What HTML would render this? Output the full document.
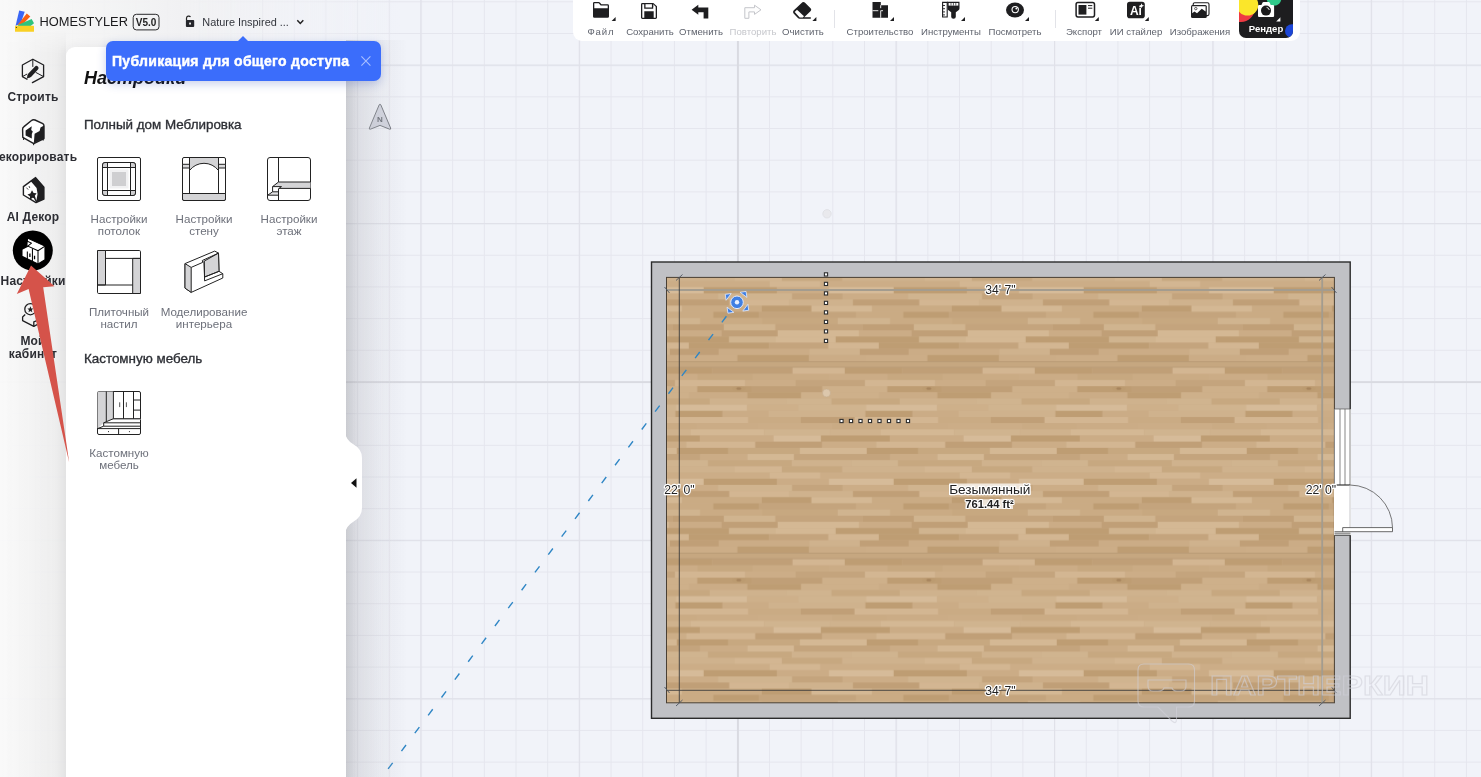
<!DOCTYPE html>
<html lang="ru">
<head>
<meta charset="utf-8">
<title>Homestyler</title>
<style>
*{box-sizing:border-box;margin:0;padding:0}
html,body{width:1481px;height:777px;overflow:hidden;background:#f1f3f9;font-family:"Liberation Sans","DejaVu Sans",sans-serif;color:#1c1c1c}
#app{position:relative;width:1481px;height:777px;overflow:hidden}
#canvas{position:absolute;left:0;top:0}

.abs{position:absolute}
#hdrbg{position:absolute;left:0;top:0;width:420px;height:777px;background:linear-gradient(90deg,rgba(249,249,249,.97) 0,rgba(245,245,245,.95) 40px,rgba(241,241,242,.92) 180px,rgba(241,242,246,.6) 300px,rgba(241,243,249,0) 400px)}
#side{position:absolute;left:0;top:30px;width:66px;height:747px;background:linear-gradient(90deg,rgba(0,0,0,0) 0,rgba(0,0,0,.006) 26px,rgba(0,0,0,.022) 50px,rgba(0,0,0,.042) 66px);-webkit-mask-image:linear-gradient(180deg,transparent 0,#000 24px);mask-image:linear-gradient(180deg,transparent 0,#000 24px)}
#panel{position:absolute;left:66px;top:47px;width:280px;height:740px;background:#fff;border-radius:9px 0 0 0;box-shadow:0 0 12px rgba(40,40,60,.07)}
#pshadow{position:absolute;left:346px;top:40px;width:60px;height:737px;background:linear-gradient(90deg,rgba(20,20,30,.15) 0,rgba(20,20,30,.085) 14px,rgba(20,20,30,.035) 36px,rgba(20,20,30,0) 62px)}
#panelcover{position:absolute;left:0;top:0;width:66px;height:47px}
.sitem{position:absolute;left:-10px;width:86px;text-align:center;font-weight:bold;font-size:12px;color:#2c2d33;white-space:nowrap;line-height:12.5px;letter-spacing:.18px}
.ptitle{position:absolute;left:84px;top:67.5px;font-size:18px;font-weight:bold;font-style:italic;color:#111}
.psec{position:absolute;left:84px;font-size:13.4px;color:#2e3036;-webkit-text-stroke:.35px #2e3036;white-space:nowrap}
.plbl{position:absolute;width:110px;text-align:center;font-size:11.600px;line-height:12.400px;color:#6d707a;white-space:nowrap}
#tip{position:absolute;left:106px;top:41px;width:275px;height:40px;border-radius:7px;background:#3b6dfb;box-shadow:0 3px 10px rgba(40,70,180,.25)}
#tip:before{content:"";position:absolute;left:132px;top:-5px;border:5.5px solid transparent;border-top:0;border-bottom:5.5px solid #3b6dfb}
#tip span{position:absolute;left:6px;top:12px;font-size:14px;font-weight:bold;color:#fff;white-space:nowrap;letter-spacing:.3px;-webkit-text-stroke:.45px #fff}
#tb{position:absolute;left:573px;top:0;width:727px;height:40.5px;background:#fff;border-radius:0 0 9px 9px}
.tl{position:absolute;top:25.600px;width:90px;margin-left:-45px;text-align:center;font-size:9.6px;color:#5f636d;white-space:nowrap}
.tl.dis{color:#c6c7cc}
.tsep{position:absolute;top:9.5px;width:1px;height:18.5px;background:#e2e3e8}
#rbtn{position:absolute;left:1239px;top:0;width:54px;height:38px;background:#1d1d1f;border-radius:0 0 7px 7px;overflow:hidden}
.sitem,.plbl,.psec,.ptitle,.tl,#tip span,svg.abs,#rbtn svg,#canvas{will-change:transform}
</style>
</head>
<body>
<div id="app">
<svg id="canvas" width="1481" height="777" viewBox="0 0 1481 777">
<defs>
<pattern id="gridS" x="8.64" y="1.3" width="31.68" height="31.68" patternUnits="userSpaceOnUse">
<path d="M0 .5H31.68M.5 0V31.68" stroke="#e5e6ee" stroke-width="1.05" fill="none"/>
</pattern>
<pattern id="gridL" x="103.6" y="64.65" width="158.4" height="158.4" patternUnits="userSpaceOnUse">
<path d="M0 .5H158.4M.5 0V158.4" stroke="#e0e1e9" stroke-width="1.400" fill="none"/>
</pattern>
<pattern id="wood" x="643.8" y="169.7" width="190" height="191.5" patternUnits="userSpaceOnUse">
<rect width="190.0" height="191.50" fill="#cbac86"/>
<rect x="0" y="0" width="190.0" height="6.5" fill="#c6a780"/>
<path d="M0 .3H190.0M0 6.2H190.0" stroke="#ad916d" stroke-width=".7"/>
<rect x="10.9" y="6.50" width="57.3" height="6.23" fill="#be9d73"/>
<rect x="68.2" y="6.50" width="80.6" height="6.23" fill="#c09f77"/>
<rect x="148.8" y="6.50" width="41.2" height="6.23" fill="#d3b692"/>
<rect x="0" y="6.50" width="10.9" height="6.23" fill="#d3b692"/>
<rect x="53.4" y="12.67" width="55.4" height="6.23" fill="#c7a880"/>
<rect x="108.9" y="12.67" width="76.3" height="6.23" fill="#caab84"/>
<rect x="185.2" y="12.67" width="4.8" height="6.23" fill="#cbac86"/>
<rect x="0" y="12.67" width="53.4" height="6.23" fill="#cbac86"/>
<rect x="31.1" y="18.83" width="70.3" height="6.23" fill="#d3b692"/>
<rect x="101.4" y="18.83" width="50.4" height="6.23" fill="#ccad87"/>
<rect x="151.8" y="18.83" width="38.2" height="6.23" fill="#c4a47d"/>
<rect x="0" y="18.83" width="31.1" height="6.23" fill="#c4a47d"/>
<rect x="53.3" y="25.00" width="54.6" height="6.23" fill="#be9d73"/>
<rect x="107.9" y="25.00" width="70.7" height="6.23" fill="#c09f77"/>
<rect x="178.6" y="25.00" width="11.4" height="6.23" fill="#ceb08a"/>
<rect x="0" y="25.00" width="53.3" height="6.23" fill="#ceb08a"/>
<rect x="45.2" y="31.17" width="58.4" height="6.23" fill="#cbac86"/>
<rect x="103.6" y="31.17" width="53.8" height="6.23" fill="#be9d73"/>
<rect x="157.4" y="31.17" width="32.6" height="6.23" fill="#ceb08a"/>
<rect x="0" y="31.17" width="45.2" height="6.23" fill="#ceb08a"/>
<rect x="65.8" y="37.33" width="76.5" height="6.23" fill="#cfb28d"/>
<rect x="142.3" y="37.33" width="45.4" height="6.23" fill="#d0b48f"/>
<rect x="187.8" y="37.33" width="2.2" height="6.23" fill="#c7a880"/>
<rect x="0" y="37.33" width="65.8" height="6.23" fill="#c7a880"/>
<rect x="32.2" y="43.50" width="71.1" height="6.23" fill="#d6bb99"/>
<rect x="103.3" y="43.50" width="51.1" height="6.23" fill="#ceb08a"/>
<rect x="154.4" y="43.50" width="35.6" height="6.23" fill="#d0b48f"/>
<rect x="0" y="43.50" width="32.2" height="6.23" fill="#d0b48f"/>
<rect x="31.4" y="49.67" width="47.4" height="6.23" fill="#be9d73"/>
<rect x="78.7" y="49.67" width="46.0" height="6.23" fill="#cbac86"/>
<rect x="124.8" y="49.67" width="65.2" height="6.23" fill="#cfb28d"/>
<rect x="0" y="49.67" width="31.4" height="6.23" fill="#cfb28d"/>
<rect x="20.6" y="55.83" width="83.9" height="6.23" fill="#d3b692"/>
<rect x="104.5" y="55.83" width="52.6" height="6.23" fill="#caab84"/>
<rect x="157.0" y="55.83" width="33.0" height="6.23" fill="#c09f77"/>
<rect x="0" y="55.83" width="20.6" height="6.23" fill="#c09f77"/>
<rect x="52.7" y="62.00" width="60.8" height="6.23" fill="#cbac86"/>
<rect x="113.5" y="62.00" width="75.0" height="6.23" fill="#ccad87"/>
<rect x="188.5" y="62.00" width="1.5" height="6.23" fill="#caab84"/>
<rect x="0" y="62.00" width="52.7" height="6.23" fill="#caab84"/>
<rect x="47.0" y="68.17" width="73.4" height="6.23" fill="#d4b894"/>
<rect x="120.5" y="68.17" width="66.2" height="6.23" fill="#d0b48f"/>
<rect x="186.7" y="68.17" width="3.3" height="6.23" fill="#cfb28d"/>
<rect x="0" y="68.17" width="47.0" height="6.23" fill="#cfb28d"/>
<rect x="56.0" y="74.33" width="73.8" height="6.23" fill="#cbac86"/>
<rect x="129.8" y="74.33" width="47.4" height="6.23" fill="#d6bb99"/>
<rect x="177.1" y="74.33" width="12.9" height="6.23" fill="#be9d73"/>
<rect x="0" y="74.33" width="56.0" height="6.23" fill="#be9d73"/>
<rect x="42.3" y="80.50" width="69.3" height="6.23" fill="#d3b692"/>
<rect x="111.5" y="80.50" width="66.8" height="6.23" fill="#c09f77"/>
<rect x="178.4" y="80.50" width="11.6" height="6.23" fill="#ccad87"/>
<rect x="0" y="80.50" width="42.3" height="6.23" fill="#ccad87"/>
<rect x="32.9" y="86.67" width="51.7" height="6.23" fill="#be9d73"/>
<rect x="84.6" y="86.67" width="71.5" height="6.23" fill="#c7a880"/>
<rect x="156.1" y="86.67" width="33.9" height="6.23" fill="#d4b894"/>
<rect x="0" y="86.67" width="32.9" height="6.23" fill="#d4b894"/>
<rect x="56.1" y="92.83" width="47.6" height="6.23" fill="#cbac86"/>
<rect x="103.7" y="92.83" width="46.5" height="6.23" fill="#d4b894"/>
<rect x="150.2" y="92.83" width="39.8" height="6.23" fill="#c4a47d"/>
<rect x="0" y="92.83" width="56.1" height="6.23" fill="#c4a47d"/>
<rect x="17.6" y="99.00" width="46.6" height="6.23" fill="#d0b48f"/>
<rect x="64.2" y="99.00" width="83.9" height="6.23" fill="#c7a880"/>
<rect x="148.0" y="99.00" width="42.0" height="6.23" fill="#cfb28d"/>
<rect x="0" y="99.00" width="17.6" height="6.23" fill="#cfb28d"/>
<rect x="8.3" y="105.17" width="82.4" height="6.23" fill="#cfb28d"/>
<rect x="90.7" y="105.17" width="47.4" height="6.23" fill="#d3b692"/>
<rect x="138.1" y="105.17" width="51.9" height="6.23" fill="#c7a880"/>
<rect x="0" y="105.17" width="8.3" height="6.23" fill="#c7a880"/>
<rect x="63.1" y="111.33" width="62.8" height="6.23" fill="#ccad87"/>
<rect x="125.9" y="111.33" width="50.7" height="6.23" fill="#d3b692"/>
<rect x="176.6" y="111.33" width="13.4" height="6.23" fill="#ccad87"/>
<rect x="0" y="111.33" width="63.1" height="6.23" fill="#ccad87"/>
<rect x="59.8" y="117.50" width="73.4" height="6.23" fill="#be9d73"/>
<rect x="133.2" y="117.50" width="52.1" height="6.23" fill="#cbac86"/>
<rect x="185.2" y="117.50" width="4.8" height="6.23" fill="#d6bb99"/>
<rect x="0" y="117.50" width="59.8" height="6.23" fill="#d6bb99"/>
<rect x="8.6" y="123.67" width="65.6" height="6.23" fill="#ccad87"/>
<rect x="74.3" y="123.67" width="74.1" height="6.23" fill="#d0b48f"/>
<rect x="148.4" y="123.67" width="41.6" height="6.23" fill="#c4a47d"/>
<rect x="0" y="123.67" width="8.6" height="6.23" fill="#c4a47d"/>
<rect x="19.1" y="129.83" width="66.5" height="6.23" fill="#c09f77"/>
<rect x="85.6" y="129.83" width="59.4" height="6.23" fill="#d3b692"/>
<rect x="145.0" y="129.83" width="45.0" height="6.23" fill="#cfb28d"/>
<rect x="0" y="129.83" width="19.1" height="6.23" fill="#cfb28d"/>
<rect x="38.1" y="136.00" width="79.9" height="6.23" fill="#caab84"/>
<rect x="118.0" y="136.00" width="49.7" height="6.23" fill="#be9d73"/>
<rect x="167.7" y="136.00" width="22.3" height="6.23" fill="#d4b894"/>
<rect x="0" y="136.00" width="38.1" height="6.23" fill="#d4b894"/>
<rect x="22.1" y="142.17" width="47.3" height="6.23" fill="#caab84"/>
<rect x="69.5" y="142.17" width="45.5" height="6.23" fill="#be9d73"/>
<rect x="114.9" y="142.17" width="75.1" height="6.23" fill="#c4a47d"/>
<rect x="0" y="142.17" width="22.1" height="6.23" fill="#c4a47d"/>
<rect x="3.9" y="148.33" width="52.5" height="6.23" fill="#d0b48f"/>
<rect x="56.5" y="148.33" width="61.7" height="6.23" fill="#caab84"/>
<rect x="118.2" y="148.33" width="71.8" height="6.23" fill="#c7a880"/>
<rect x="0" y="148.33" width="3.9" height="6.23" fill="#c7a880"/>
<rect x="28.6" y="154.50" width="51.5" height="6.23" fill="#c09f77"/>
<rect x="80.1" y="154.50" width="51.5" height="6.23" fill="#d0b48f"/>
<rect x="131.6" y="154.50" width="58.4" height="6.23" fill="#c4a47d"/>
<rect x="0" y="154.50" width="28.6" height="6.23" fill="#c4a47d"/>
<rect x="25.1" y="160.67" width="52.7" height="6.23" fill="#cbac86"/>
<rect x="77.8" y="160.67" width="56.1" height="6.23" fill="#c09f77"/>
<rect x="133.9" y="160.67" width="56.1" height="6.23" fill="#d4b894"/>
<rect x="0" y="160.67" width="25.1" height="6.23" fill="#d4b894"/>
<rect x="1.8" y="166.83" width="83.5" height="6.23" fill="#be9d73"/>
<rect x="85.3" y="166.83" width="46.4" height="6.23" fill="#d0b48f"/>
<rect x="131.6" y="166.83" width="58.4" height="6.23" fill="#d4b894"/>
<rect x="0" y="166.83" width="1.8" height="6.23" fill="#d4b894"/>
<rect x="45.0" y="173.00" width="80.3" height="6.23" fill="#be9d73"/>
<rect x="125.3" y="173.00" width="59.3" height="6.23" fill="#c4a47d"/>
<rect x="184.6" y="173.00" width="5.4" height="6.23" fill="#d3b692"/>
<rect x="0" y="173.00" width="45.0" height="6.23" fill="#d3b692"/>
<rect x="26.0" y="179.17" width="48.9" height="6.23" fill="#c09f77"/>
<rect x="74.9" y="179.17" width="90.7" height="6.23" fill="#cbac86"/>
<rect x="165.7" y="179.17" width="24.3" height="6.23" fill="#cfb28d"/>
<rect x="0" y="179.17" width="26.0" height="6.23" fill="#cfb28d"/>
<rect x="32.1" y="185.33" width="61.6" height="6.23" fill="#ccad87"/>
<rect x="93.6" y="185.33" width="71.6" height="6.23" fill="#be9d73"/>
<rect x="165.2" y="185.33" width="24.8" height="6.23" fill="#cbac86"/>
<rect x="0" y="185.33" width="32.1" height="6.23" fill="#cbac86"/>
<ellipse cx="95" cy="27.5" rx="7" ry="2.6" fill="#b8966c" opacity=".3"/>
<ellipse cx="95" cy="27.5" rx="2.6" ry="1.2" fill="#9d7a54" opacity=".7"/>
</pattern>
</defs>
<rect width="1481" height="777" fill="#f1f3f9"/>
<rect width="1481" height="777" fill="url(#gridS)"/>
<rect width="1481" height="777" fill="url(#gridL)"/>
<path d="M0 382.100H1481M737.900 0V777" stroke="#d9dae1" stroke-width="1.900" fill="none"/>
<!-- floor plan -->
<g id="plan">
<rect x="651.5" y="262" width="698.7" height="456.3" fill="#c0c1c5" stroke="#2b2b2b" stroke-width="1.4"/>
<rect x="666.5" y="277.4" width="667.9" height="425.4" fill="url(#wood)" stroke="#4a4034" stroke-width="1"/>
<!-- window + door on right wall -->
<rect x="1334" y="409" width="17" height="126.2" fill="#ffffff"/>
<path d="M1334.5 409V485M1340 409V485M1345 409V485M1350 409V485M1334.5 409H1350.5" stroke="#555" stroke-width=".7" fill="none"/>
<path d="M1334.5 485H1350" stroke="#333" stroke-width="1.2"/>
<path d="M1350 485V532" stroke="#b9b9bd" stroke-width=".8"/>
<path d="M1350 485A43 43 0 0 1 1392.5 527.6" stroke="#555" stroke-width=".8" fill="none"/>
<path d="M1342.7 527.6H1392.5V531.7H1334.5M1342.7 527.6V531.7M1334.5 533.2H1350.5" stroke="#444" stroke-width=".8" fill="#fff"/>
<path d="M1334.5 535.2H1350.5" stroke="#333" stroke-width="1"/>
<!-- dimension lines -->
<path d="M667 290H1334" stroke="#a39c8f" stroke-width="1.8"/>
<path d="M1322.2 277.4V702.8" stroke="#a39c8f" stroke-width="1.8"/>
<path d="M679.3 277.4V702.8" stroke="#3c3c3c" stroke-width=".9"/>
<path d="M667 690.3H1334" stroke="#3c3c3c" stroke-width=".9"/>
<g stroke="#4d5560" stroke-width=".9" fill="none">
<path d="M676 280.5L682.5 274.5M664.5 287L669.5 293"/>
<path d="M1319 280.5L1325.5 274.5M1331.5 287L1336.5 293"/>
<path d="M676 706L682.5 700M664.5 687L669.5 693"/>
<path d="M1319 706L1325.5 700M1331.5 687L1336.5 693"/>
</g>
<!-- labels -->
<rect x="949" y="483.500" width="81.500" height="11.500" fill="#fff" opacity=".72"/><rect x="965.500" y="499.300" width="47.500" height="9.700" fill="#fff" opacity=".72"/>
<g font-family="'Liberation Sans','DejaVu Sans',sans-serif" font-size="12.2" fill="#222" text-anchor="middle" stroke="#fff" stroke-width="2.4" stroke-linejoin="round" paint-order="stroke">
<text x="1000.5" y="294">34' 7"</text>
<text x="1000.5" y="694.5">34' 7"</text>
<text x="679.5" y="493.800">22' 0"</text>
<text x="1321" y="493.800">22' 0"</text>
<text x="989.800" y="493.600" font-size="13.600">Безымянный</text>
<text x="989.500" y="508" font-size="11.200" font-weight="bold" stroke-width="2.200">761.44 ft²</text>
</g>
<!-- handles -->
<g fill="#fff" stroke="#2e2e2e" stroke-width="1.1">
<rect x="824.4" y="272.8" width="3.2" height="3.2"/><rect x="824.4" y="282.3" width="3.2" height="3.2"/><rect x="824.4" y="291.8" width="3.2" height="3.2"/><rect x="824.4" y="301.3" width="3.2" height="3.2"/><rect x="824.4" y="310.8" width="3.2" height="3.2"/><rect x="824.4" y="320.3" width="3.2" height="3.2"/><rect x="824.4" y="329.8" width="3.2" height="3.2"/><rect x="824.4" y="339.3" width="3.2" height="3.2"/>
<rect x="839.9" y="419.4" width="3.2" height="3.2"/><rect x="849.4" y="419.4" width="3.2" height="3.2"/><rect x="858.9" y="419.4" width="3.2" height="3.2"/><rect x="868.4" y="419.4" width="3.2" height="3.2"/><rect x="877.9" y="419.4" width="3.2" height="3.2"/><rect x="887.4" y="419.4" width="3.2" height="3.2"/><rect x="896.9" y="419.4" width="3.2" height="3.2"/><rect x="906.4" y="419.4" width="3.2" height="3.2"/>
</g>
<circle cx="826.5" cy="393" r="4" fill="#dcc7ac" stroke="#c4ad8e" stroke-width=".6"/>
<circle cx="827" cy="213.800" r="4.200" fill="#e9e9ed" stroke="#dddee3" stroke-width=".8"/>
<!-- camera dashed line -->
<path d="M726.400 316.250L376.200 784.850" stroke="#2f86c5" stroke-width="1.400" stroke-dasharray="7.600 14.700" fill="none"/>
<!-- camera marker -->
<g transform="translate(737 302.3)">
<g transform="rotate(-8)" fill="#3f7fe3" stroke="#dfe9fb" stroke-width=".8">
<path d="M-10.5 -9.5L-4.5 -9.5L-10.5 -3.5Z"/><path d="M10.5 -9.5L4.5 -9.5L10.5 -3.5Z"/><path d="M-10.5 9.5L-4.5 9.5L-10.5 3.5Z"/><path d="M10.5 9.5L4.5 9.5L10.5 3.5Z"/>
</g>
<circle r="6.3" fill="#3f7fe3" stroke="#e4ecfb" stroke-width="1"/>
<circle r="2.2" fill="#e8f0ff"/>
</g>
</g>
<!-- north arrow -->
<path d="M380 104.200Q380.500 104.200 380.900 105L390.600 128Q391.100 129.600 389.600 129.200L380 125.400L370.400 129.200Q368.900 129.600 369.400 128L379.100 105Q379.500 104.200 380 104.200Z" fill="#d3d5e0" stroke="#5a5e66" stroke-width=".8"/>
<text x="380" y="121.900" text-anchor="middle" font-family="'Liberation Sans','DejaVu Sans',sans-serif" font-size="8" font-weight="bold" fill="#666a73">N</text>
<!-- watermark -->
<g fill="none" stroke="#d0d1d8" stroke-opacity=".6" stroke-width="1.100">
<path d="M1144 664H1188.500Q1194.500 664 1194.500 670V701Q1194.500 707 1188.500 707H1176.500V719Q1176.500 725 1172 721L1158 707H1144Q1138 707 1138 701V670Q1138 664 1144 664Z"/>
<path d="M1148 680H1186V686Q1186 691 1181 691H1177Q1173 691 1172 688H1164Q1163 691 1158 691H1153Q1148 691 1148 686Z"/>
<text x="1210" y="695" font-family="'Liberation Sans','DejaVu Sans',sans-serif" font-size="28.500" font-weight="bold" textLength="219" lengthAdjust="spacingAndGlyphs">ПАРТНЕРКИН</text>
</g>
</svg>

<div id="hdrbg"></div>
<div id="side"></div>
<div id="pshadow"></div>

<!-- sidebar items -->
<svg class="abs" style="left:0;top:47px" width="66" height="330" viewBox="0 47 66 330">
<!-- build icon -->
<g fill="none" stroke="#1f1f21" stroke-width="1.3" stroke-linejoin="round" stroke-linecap="round">
<path d="M43.6 76.6V65L32.8 59.3L22.4 65V76.6L27 79.2M43.6 76.6L32.4 82.6"/>
<path d="M32.8 59.3V66.5M43.6 76.6L36 72.5M22.4 76.6L26.8 74.2" stroke-width="1"/>
</g>
<path d="M36.400 68.100L29.700 75.300" stroke="#1f1f21" stroke-width="4.300" stroke-linecap="round" fill="none"/>
<path d="M27.700 75L30.200 77.300L26.600 78.700Z" fill="#1f1f21"/>
<!-- decorate icon (armchair) -->
<path d="M22.6 129.5Q22.4 127.6 24 126.6L31.5 120.5Q33 119.2 35 120L42.8 123.6Q44 124.4 44 126V138.5L33.8 143.6L22.8 137.4Z" fill="#fff" stroke="#1f1f21" stroke-width="1.4" stroke-linejoin="round"/>
<path d="M44 125.5L40.5 127.4L39.6 131L34.6 133.8L33.8 143.2L44 138.2Z" fill="#1f1f21"/>
<path d="M31.8 126.2L25.6 130.4V135.4L31.8 138.6V134L32.8 131.6L31.2 130Z" fill="#1f1f21"/>
<path d="M23.6 137.8V140M33.6 143.5V145.2M43.2 138.6V140.6" stroke="#1f1f21" stroke-width="1"/>
<!-- AI decor icon -->
<path d="M23.4 186.6L35.6 177.6L43.9 187.2V199L36 202.6L23.4 195Z" fill="#fff" stroke="#1f1f21" stroke-width="1.4" stroke-linejoin="round"/>
<path d="M30.6 181L35.6 177.4L44 187V199L36 202.6L37.6 194L36.6 188Z" fill="#1f1f21"/>
<path d="M32 190.2L33.6 193L36.6 193.2L34.8 195.8L35.8 198.8L32.6 197.8L30 199.8L30 196.4L27.4 194.6L30.4 193.4Z" fill="#1f1f21"/>
<path d="M34.4 198L37 202.4" stroke="#1f1f21" stroke-width="1.4"/>
<path d="M26.4 187.6L28.2 189.6M29 186L29.8 188" stroke="#1f1f21" stroke-width=".8"/>
<!-- active circle -->
<circle cx="32.8" cy="250.6" r="20" fill="#000"/>
<g transform="translate(33.6 251) scale(1.16) translate(-32.8 -249.8)" fill="#fff" stroke="#000" stroke-width=".9" stroke-linejoin="round">
<path d="M27.4 238.6L42.6 245.6V257.4L36.6 261L22.8 254.4V248.4L27 246.2Z"/>
<path d="M36.6 249.6L42.6 245.6M36.6 249.6V261M36.6 249.6L27.4 245.4" fill="none"/>
<path d="M27.4 238.6V241.4L31 243L27 246.2" fill="none"/>
<path d="M27.4 250.2V256.6M31.8 247.6V258.6" fill="none"/>
<path d="M29.6 252V255M33.6 254V257" fill="none" stroke-width="1.1"/>
</g>
<!-- cabinet icon -->
<circle cx="30.4" cy="309.2" r="5.6" fill="none" stroke="#1f1f21" stroke-width="1.3"/>
<path d="M30.4 306.2L31.3 308.4L33.4 308.6L31.8 310L32.3 312.2L30.4 311L28.5 312.2L29 310L27.4 308.6L29.5 308.4Z" fill="#1f1f21"/>
<path d="M25.2 314.6L22.6 317V320.6L33.8 326.4L42 322V318.4L36.4 315.4" fill="none" stroke="#1f1f21" stroke-width="1.3" stroke-linejoin="round"/>
<path d="M33.8 326.4V322L42 318.4" fill="none" stroke="#1f1f21" stroke-width="1.3"/>
</svg>
<div id="panel"></div>
<!-- header -->
<svg class="abs" style="left:0;top:0" width="340" height="47" viewBox="0 0 340 47">
<path d="M19.200 10.500L24.700 11.800L20.500 24L15.600 25.800Z" fill="#3a66f5"/>
<path d="M26.800 13.600L30.300 16.600L23 24L17.500 25Z" fill="#fa6113"/>
<path d="M31.600 18.900L34 23.300L30.300 26.200L17.500 26L19 24.600Z" fill="#2fc37c"/>
<rect x="15" y="25.8" width="19" height="6" rx=".6" fill="#f9d024"/>
<circle cx="16.4" cy="27.5" r=".6" fill="#3a2a00"/>
<text id="hs" x="39.4" y="25.5" font-family="'Liberation Sans','DejaVu Sans',sans-serif" font-size="13.2" fill="#1b1b1d" textLength="88.6" lengthAdjust="spacingAndGlyphs">HOMESTYLER</text>
<rect x="133.2" y="14.3" width="25.8" height="15.6" rx="3.2" fill="none" stroke="#2a2a2c" stroke-width="1"/>
<text x="146.1" y="26" text-anchor="middle" font-family="'Liberation Sans','DejaVu Sans',sans-serif" font-size="10" font-weight="bold" fill="#222">V5.0</text>
<!-- lock -->
<g transform="translate(.9 .5)">
<path d="M185.600 20V17.800A2.200 2.200 0 0 1 189.600 16.500" fill="none" stroke="#222" stroke-width="1.200"/>
<rect x="185" y="19.600" width="8.300" height="6.800" rx=".9" fill="#25262b"/>
<rect x="188.300" y="22.100" width="1.700" height="1.900" fill="#fff"/>
</g>
<text x="202.300" y="26" font-family="'Liberation Sans','DejaVu Sans',sans-serif" font-size="11" fill="#33363d" textLength="86.600" lengthAdjust="spacingAndGlyphs">Nature Inspired ...</text>
<path d="M297.3 20.3L300.3 23.4L303.3 20.3" fill="none" stroke="#222" stroke-width="1.5"/>
</svg>

<div class="sitem" style="top:90.600px">Строить</div>
<div class="sitem" style="top:151px">Декорировать</div>
<div class="sitem" style="top:211px">AI Декор</div>
<div class="sitem" style="top:275px">Настройки</div>
<div class="sitem" style="top:335.200px">Мой<br>кабинет</div>

<!-- panel content -->
<div class="ptitle">Настройки</div>
<div class="psec" style="top:117.200px">Полный дом Меблировка</div>
<div class="psec" style="top:351.200px">Кастомную мебель</div>
<svg class="abs" style="left:66px;top:150px" width="280" height="300" viewBox="66 150 280 300">
<g fill="none" stroke="#222" stroke-width="1" stroke-linejoin="round">
<!-- ceiling -->
<rect x="97.5" y="157.5" width="43" height="43" rx="1.5" fill="#fff"/>
<rect x="102.5" y="162.5" width="33" height="33" rx="2.5" fill="#fff"/>
<path d="M102.5 165Q102.5 162.5 105 162.5H107.5V167.5H102.5ZM130.5 162.5H133Q135.500 162.5 135.5 165V167.5H130.5ZM102.5 190.5H107.5V195.500H105Q102.5 195.500 102.5 193ZM130.5 190.5H135.5V193Q135.5 195.500 133 195.500H130.5Z" fill="#cfcfd1" stroke="none"/>
<rect x="109.5" y="169.5" width="19" height="19" fill="#f1f1f2" stroke="none"/>
<rect x="112" y="172" width="14" height="14" fill="#cfcfd1" stroke="none"/>
<rect x="102.5" y="162.5" width="33" height="33" rx="2.5"/>
<path d="M107.5 162.5V195.5M130.5 162.5V195.5M102.5 167.5H135.5M102.5 190.500H135.5"/>
<!-- wall -->
<rect x="182.5" y="157.5" width="43" height="43" rx="1.5" fill="#fff"/>
<path d="M182.5 193.5H225.5V199Q225.5 200.5 224 200.5H184Q182.5 200.5 182.5 199Z" fill="#d4d4d6"/>
<path d="M189.500 157.5H218.5V170.5A18.2 18.2 0 0 0 189.500 170.5Z" fill="#d4d4d6"/>
<path d="M182.5 164.3H189.500V168H182.5ZM218.5 164.3H225.5V168H218.5Z" fill="#dadadc"/>
<path d="M189.500 157.5V193.5M218.5 157.5V193.5"/>
<!-- floor -->
<rect x="267.5" y="157.5" width="43" height="43" rx="2.5" fill="#fff"/>
<path d="M278.5 182H310.5V188.400H279L281.5 186.600H272.600Z" fill="#d4d4d6" stroke="none"/>
<path d="M272.600 191.800H278.5V195.200H267.700Z" fill="#e2e2e4" stroke="none"/>
<path d="M278.5 157.500V182H310.5M278.5 182L272.600 186.600H281.5L279 188.400H310.5M272.600 186.600V191.800H278.5M272.600 191.800L267.700 195.200H278.5M278.5 188.400V200.500"/>
<!-- tiles -->
<rect x="97.5" y="250.5" width="43" height="43" rx="1.200" fill="#fff"/>
<path d="M97.5 250.5H105.5V285H97.5ZM132.700 258.400H140.5V293.500H132.700Z" fill="#d4d4d6"/>
<path d="M105.5 258.400H140.5M97.5 285H132.700"/>
<!-- interior modeling -->
<path d="M185 263.600L214.700 251.100L218.500 253.100L219 271.300L222.800 273.700V278L191.200 292.400L185 288.100Z" fill="#fff"/>
<path d="M185 263.600L191.200 267.400V292.400L185 288.100Z" fill="#d4d4d6"/>
<path d="M204.100 261.200L218.500 253.100L219 271.300L204.600 277Z" fill="#d4d4d6"/>
<path d="M191.200 267.400L202.700 262.400L202.300 260.500M204.100 261.200L204.600 280.900L222.800 273.700M204.600 277L219 271.300M202.300 260.500L218.500 253.100"/>
<!-- custom furniture -->
<rect x="97.5" y="391.500" width="43" height="43" rx="1.500" fill="#fff"/>
<path d="M97.500 391.500H113.400V418.700L103.700 422.800L97.500 428.600Z" fill="#d4d4d6" stroke="none"/>
<path d="M113.400 418.700H140.500V420H110.500Z" fill="#d4d4d6" stroke="none"/>
<path d="M106.300 391.500V421.500M113.400 391.500V418.700M123.500 391.500V418.700M133.500 391.500V418.700M133.500 400H140.500M133.500 410.100H140.500M113.400 418.700H140.500M113.400 418.700L103.700 422.800H140.500M103.700 422.800V426.200H140.500M103.700 426.200L97.500 428.600H140.500M118.600 428.600V434.500"/>
<path d="M119.700 402.300V407.100M126.400 402.300V407.100" stroke-width=".9" stroke="#444"/>
</g>
<circle cx="108.500" cy="431.600" r=".55" fill="#222"/><circle cx="129.400" cy="431.600" r=".55" fill="#222"/>
</svg>
<div class="plbl" style="left:64.1px;top:213px">Настройки<br>потолок</div>
<div class="plbl" style="left:149.1px;top:213px">Настройки<br>стену</div>
<div class="plbl" style="left:234.1px;top:213px">Настройки<br>этаж</div>
<div class="plbl" style="left:64.1px;top:306px">Плиточный<br>настил</div>
<div class="plbl" style="left:149.1px;top:306px">Моделирование<br>интерьера</div>
<div class="plbl" style="left:64.1px;top:447px">Кастомную<br>мебель</div>
<!-- collapse handle -->
<svg class="abs" style="left:345px;top:430px" width="20" height="106" viewBox="345 430 20 106">
<path d="M345 432Q346 440 353 444Q362 449 362 458V508Q362 517 353 522Q346 526 345 534Z" fill="#fff"/>
<path d="M351 483L356.5 478.2V487.8Z" fill="#111"/>
</svg>
<div id="tb"></div>
<svg class="abs" style="left:573px;top:0" width="727" height="41" viewBox="573 0 727 41">
<g fill="#1e1e20">
<!-- file/folder -->
<path d="M593 3.300Q593 1.900 594.400 1.900H598.700Q599.400 1.900 599.900 2.500L601.400 4.300H607.600Q609 4.300 609 5.700V16.400Q609 17.800 607.600 17.800H594.400Q593 17.800 593 16.400Z"/>
<path d="M594.300 3.200H598.700L600.700 5.600H607.700V8.200H594.300Z" fill="#fff"/>
<path d="M615.600 17V21H611.600Z"/>
<!-- save -->
<path d="M641 4.300Q641 2.900 642.400 2.900H653.300L657 6.300V17.600Q657 19 655.600 19H642.400Q641 19 641 17.600Z"/>
<path d="M642.300 4.200H644.200V8.800H653.200V4.200L655.700 6.800V17.700H653.700V11.300H644.300V17.700H642.300Z" fill="#fff"/>
<rect x="645.5" y="4.200" width="6.400" height="3.300" fill="#fff"/>
<rect x="652.200" y="5" width="1" height="2.200" rx=".5"/>
<!-- undo -->
<path d="M691.600 9.800L698.300 4.800V7.400H708.300V18.600H703.600V12.200H698.300V14.800Z"/>
<!-- erase -->
<path d="M793.600 10.600L802.400 2.300Q803.600 1.400 804.800 2.500L810.800 8.600Q811.800 9.800 810.700 10.900L804.200 17.300H810.800V18.700H799.500Q798.600 18.700 797.900 18.100L793.600 13.600Q792.400 12.100 793.600 10.600Z"/>
<path d="M794.700 12L797 9.800L804 16.200L802.800 17.400H799.700Z" fill="#fff"/>
<path d="M816.400 17V21H812.400Z"/>
<!-- construction -->
<path d="M872.500 2H880.800V5.200H888V17.800H872.500Z"/>
<path d="M872.500 10.700H878.300M880.700 10.700H883M880.700 10.700V17.800M880.700 5.200V8.200" stroke="#fff" stroke-width=".9" fill="none"/>
<path d="M894 17V21H890Z"/>
<!-- tools -->
<path d="M947 1.800H959.500V8.200Q959.500 9.500 958.500 10.300L955.800 12.300V16.800Q955.800 18.800 953.500 18.800Q951.200 18.800 951.200 16.800V12.300L948.500 10.300Q947.500 9.500 947.500 8.200Z"/>
<path d="M948.600 3H958.300V5.600H948.600Z" fill="#fff"/>
<path d="M951 3V5.600M953.400 3V5.600M955.800 3V5.600" stroke="#1e1e20" stroke-width=".7"/>
<path d="M942.600 2.400H947.200V17H942.600Z" fill="#fff" stroke="#1e1e20" stroke-width="1.100"/>
<path d="M943 5.500H945M943 8.700H945M943 11.900H945M943 14.900H945" stroke="#1e1e20" stroke-width=".9"/>
<path d="M965 17V21H961Z"/>
<!-- view eye -->
<ellipse cx="1015" cy="10" rx="9" ry="7.400"/>
<circle cx="1015.200" cy="9.600" r="3.700" fill="#fff"/>
<circle cx="1015.200" cy="9.600" r="2.600"/>
<circle cx="1016.300" cy="8.500" r=".9" fill="#fff"/>
<path d="M1029 17V21H1025Z"/>
<!-- export -->
<rect x="1076.100" y="2.600" width="18.400" height="14.300" rx="1.800" fill="#fff" stroke="#1e1e20" stroke-width="1.500"/>
<rect x="1078.500" y="5" width="7.900" height="9.600"/>
<path d="M1088 5.600H1092.300M1088 8.200H1092.300" stroke="#1e1e20" stroke-width="1"/>
<path d="M1098.800 17V21H1094.800Z"/>
<!-- AI styler -->
<rect x="1127" y="1.800" width="17.800" height="16.400" rx="2.800"/>
<path d="M1148.800 17V21H1144.800Z"/>
<!-- images -->
<rect x="1193.200" y="2.800" width="15.800" height="12.800" rx="1.500" fill="#fff" stroke="#1e1e20" stroke-width="1.100"/>
<rect x="1191" y="5" width="15.800" height="13" rx="1.500"/>
<path d="M1192.200 6.200H1205.600V11.500L1201.800 8.800L1197 13.300L1194.500 11.500L1192.200 13.200Z" fill="#fff"/>
<circle cx="1195.800" cy="8.600" r="1.200" fill="#fff" stroke="#1e1e20" stroke-width=".7"/>
</g>
<text x="1135.900" y="14.800" text-anchor="middle" font-family="'Liberation Sans','DejaVu Sans',sans-serif" font-weight="bold" font-size="12" fill="#fff">Ai</text>
<path d="M1141.600 3.200L1142.300 5L1144.100 5.700L1142.300 6.400L1141.600 8.200L1140.900 6.400L1139.100 5.700L1140.900 5Z" fill="#fff"/>
<!-- redo (disabled) -->
<path d="M761 9.800L754.500 5.200V7.700H744.800V18.300H748.900V11.900H754.500V14.400Z" fill="#fdfdfd" stroke="#c4c5ca" stroke-width="1" stroke-linejoin="round"/>
</svg>
<div class="tl" style="left:601px;letter-spacing:.9px">Файл</div>
<div class="tl" style="left:649.5px">Сохранить</div>
<div class="tl" style="left:700.9px">Отменить</div>
<div class="tl dis" style="left:752.5px">Повторить</div>
<div class="tl" style="left:802.5px">Очистить</div>
<div class="tsep" style="left:834px"></div>
<div class="tl" style="left:879.9px">Строительство</div>
<div class="tl" style="left:951.3px">Инструменты</div>
<div class="tl" style="left:1015.3px">Посмотреть</div>
<div class="tsep" style="left:1054.500px"></div>
<div class="tl" style="left:1084.2px">Экспорт</div>
<div class="tl" style="left:1136.3px">ИИ стайлер</div>
<div class="tl" style="left:1199.8px">Изображения</div>
<div id="rbtn">
<svg width="54" height="38" viewBox="1239 0 54 38">
<circle cx="1241" cy="8.500" r="13.600" fill="#ee3a43"/>
<circle cx="1247.500" cy="4.800" r="10.800" fill="#fbe62a"/>
<circle cx="1274" cy="-1.500" r="7.300" fill="#2fc98a"/>
<circle cx="1291.800" cy="31" r="6.800" fill="#1c46d6"/>
<path d="M1258 6Q1258 4.900 1259.100 4.900H1261.400L1262.600 2.600Q1262.900 2 1263.600 2H1268.600Q1269.300 2 1269.600 2.600L1270.800 4.900H1273Q1274.100 4.900 1274.100 6V16Q1274.100 17.100 1273 17.100H1259.100Q1258 17.100 1258 16Z" fill="#fff"/>
<circle cx="1266" cy="10.600" r="5" fill="#1a1a1c"/>
<path d="M1266.600 7.400A3.200 3.200 0 0 1 1269.300 10" stroke="#fff" stroke-width=".9" fill="none"/>
<path d="M1280.400 17.200V21.500H1276.200Z" fill="#fff"/>
<text x="1266" y="32" text-anchor="middle" font-family="'Liberation Sans','DejaVu Sans',sans-serif" font-weight="bold" font-size="9.800" fill="#fff" textLength="34.500" lengthAdjust="spacingAndGlyphs">Рендер</text>
</svg>
</div>
<div id="tip"><span>Публикация для общего доступа</span><svg class="abs" style="left:254px;top:13.700px" width="12" height="12" viewBox="0 0 12 12"><path d="M1.400 1.400L10.400 10.600M10.400 1.400L1.400 10.600" stroke="#a9bfff" stroke-width="1.100" fill="none"/></svg></div>
<svg class="abs" style="left:0;top:255px" width="90" height="215" viewBox="0 255 90 215">
<path d="M31 265.500L54.500 286.200L43.200 287.200L69.200 462.500L28.600 289L16.800 294Z" fill="#d5534a"/>
</svg>
</div>
</body>
</html>
